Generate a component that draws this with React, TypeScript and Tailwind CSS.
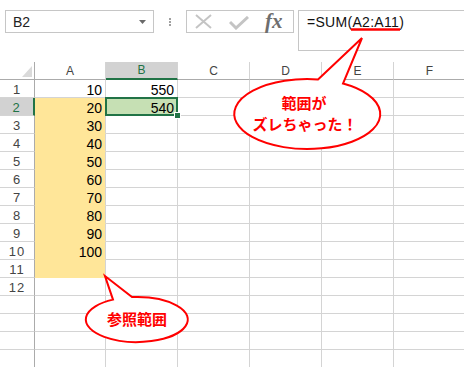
import React from 'react';

const cols = ['A', 'B', 'C', 'D', 'E', 'F'];
const rows = Array.from({ length: 16 }, (_, i) => i + 1);
const aValues: Record<number, number> = { 1: 10, 2: 20, 3: 30, 4: 40, 5: 50, 6: 60, 7: 70, 8: 80, 9: 90, 10: 100 };
const bValues: Record<number, number> = { 1: 550, 2: 540 };

function Toolbar() {
  return (
    <div className="flex items-start h-[62px] pt-[10px]">
      {/* Name box */}
      <div className="ml-[5px] w-[149px] h-[23px] border border-[#c6c6c6] flex items-center justify-between pl-[7px] pr-[7px] pt-[1px]">
        <span className="text-[14px] leading-[14px] text-[#222]">B2</span>
        <svg width="7" height="4" viewBox="0 0 7 4">
          <path d="M0 0 L7 0 L3.5 4 Z" fill="#6a6a6a" />
        </svg>
      </div>

      {/* Separator dots */}
      <div className="ml-[15px] mt-[8px] flex flex-col gap-[1px]">
        <div className="w-[2px] h-[2px] bg-[#a0a0a0]" />
        <div className="w-[2px] h-[2px] bg-[#a0a0a0]" />
        <div className="w-[2px] h-[2px] bg-[#a0a0a0]" />
      </div>

      {/* Cancel / enter / fx */}
      <div className="ml-[15px] w-[108px] h-[23px] border border-[#c6c6c6] flex items-center pl-[8px]">
        <svg width="17" height="15" viewBox="0 0 17 15">
          <path d="M1 1 L16 14 M16 1 L1 14" stroke="#c4c4c4" strokeWidth="2" fill="none" />
        </svg>
        <svg width="20" height="14" viewBox="0 0 20 14" className="ml-[17px] mt-[2px]">
          <path d="M1 6 L7 12 L19 1" stroke="#c4c4c4" strokeWidth="3" fill="none" />
        </svg>
        <span className="ml-[16px] font-['Liberation_Serif',serif] italic font-bold text-[21px] leading-[21px] text-[#6e6e6e]">
          fx
        </span>
      </div>

      {/* Formula bar */}
      <div className="ml-[4px] flex-1 h-[41px] border border-r-0 border-[#c6c6c6] pl-[8px] pt-[4px] text-[14px] leading-[14px] tracking-[0.3px] text-[#111]">
        =SUM(A2:A11)
      </div>
    </div>
  );
}

function Sheet() {
  return (
    <div className="grid grid-cols-[35px_71px_72px_72px_72px_72px_72px] grid-rows-[18px_repeat(16,18px)]">
      {/* corner */}
      <div className="border-r border-b border-[#ababab] flex items-end justify-end pr-[2px] pb-[2px]">
        <svg width="10" height="11" viewBox="0 0 10 11">
          <path d="M10 0 L10 11 L0 11 Z" fill="#dadada" />
        </svg>
      </div>
      {cols.map((c) =>
        c === 'B' ? (
          <div
            key={c}
            className="bg-[#d2d2d2] border-r border-r-[#d4d4d4] border-b-2 border-b-[#217346] flex items-center justify-center text-[12px] leading-[12px] text-[#217346]"
          >
            {c}
          </div>
        ) : (
          <div
            key={c}
            className="border-r border-r-[#d4d4d4] border-b border-b-[#ababab] flex items-center justify-center text-[12px] leading-[12px] text-[#444]"
          >
            {c}
          </div>
        )
      )}

      {rows.map((r) => (
        <React.Fragment key={r}>
          {r === 2 ? (
            <div className="bg-[#d2d2d2] border-r-2 border-r-[#217346] border-b border-b-[#d4d4d4] flex items-end justify-center pb-[1px] text-[13px] leading-[12px] tracking-[1px] text-[#217346]">
              {r}
            </div>
          ) : (
            <div className="border-r border-r-[#ababab] border-b border-b-[#d4d4d4] flex items-end justify-center pb-[1px] text-[13px] leading-[12px] tracking-[1px] text-[#444]">
              {r <= 12 ? r : ''}
            </div>
          )}

          {/* column A */}
          {r >= 2 && r <= 11 ? (
            <div className="bg-[#ffe699] border-r border-r-[#d4d4d4] border-b border-b-[#ffe699] flex items-end justify-end pr-[3px] pb-[1px] text-[14px] leading-[12px] text-black">
              {aValues[r] ?? ''}
            </div>
          ) : (
            <div className="border-r border-b border-[#d4d4d4] flex items-end justify-end pr-[3px] pb-[1px] text-[14px] leading-[12px] text-black">
              {aValues[r] ?? ''}
            </div>
          )}

          {/* column B */}
          {r === 2 ? (
            <div className="relative bg-[#c6e0b4] border-r border-b border-[#d4d4d4] flex items-end justify-end pr-[3px] pb-[1px] text-[14px] leading-[12px] text-black">
              {bValues[r]}
              <div className="absolute z-10 -left-[1px] -top-[1px] w-[73px] h-[19px] border-2 border-[#217346]" />
              <div className="absolute z-20 left-[68px] top-[14px] w-[7px] h-[7px] bg-[#217346] border border-white" />
            </div>
          ) : (
            <div className="border-r border-b border-[#d4d4d4] flex items-end justify-end pr-[3px] pb-[1px] text-[14px] leading-[12px] text-black">
              {bValues[r] ?? ''}
            </div>
          )}

          <div className="border-r border-b border-[#d4d4d4]" />
          <div className="border-r border-b border-[#d4d4d4]" />
          <div className="border-r border-b border-[#d4d4d4]" />
          <div className="border-r border-b border-[#d4d4d4]" />
        </React.Fragment>
      ))}
    </div>
  );
}

function Callouts() {
  const jp = "'Noto Sans CJK JP', sans-serif";
  return (
    <svg className="absolute inset-0 pointer-events-none z-30" width="464" height="367" viewBox="0 0 464 367">
      {/* underline of the range in the formula */}
      <line x1="351" y1="29.5" x2="400" y2="29.5" stroke="#ff0000" strokeWidth="2.5" />

      {/* range shifted */}
      <path
        d="M318 79.4 L362 38 L343 83.5 A73 35 0 1 1 318 79.4 Z"
        fill="white"
        stroke="#ff0000"
        strokeWidth="2"
        strokeLinejoin="miter"
      />
      <text x="304" y="102" textAnchor="middle" dominantBaseline="central" fill="#ff0000" fontFamily={jp} fontWeight="700" fontSize="15">
        範囲が
      </text>
      <text x="305" y="123" textAnchor="middle" dominantBaseline="central" fill="#ff0000" fontFamily={jp} fontWeight="700" fontSize="15">
        ズレちゃった！
      </text>

      {/* reference range */}
      <path
        d="M113 299.6 L105 276 L132 297.1 A51 22.5 0 1 1 113 299.6 Z"
        fill="white"
        stroke="#ff0000"
        strokeWidth="2"
      />
      <text x="137" y="318" textAnchor="middle" dominantBaseline="central" fill="#ff0000" fontFamily={jp} fontWeight="700" fontSize="15">
        参照範囲
      </text>
    </svg>
  );
}

export default function App() {
  return (
    <div className="relative w-[464px] h-[367px] overflow-hidden bg-white font-['Liberation_Sans',Arial,sans-serif]">
      <Toolbar />
      <Sheet />
      <Callouts />
    </div>
  );
}
